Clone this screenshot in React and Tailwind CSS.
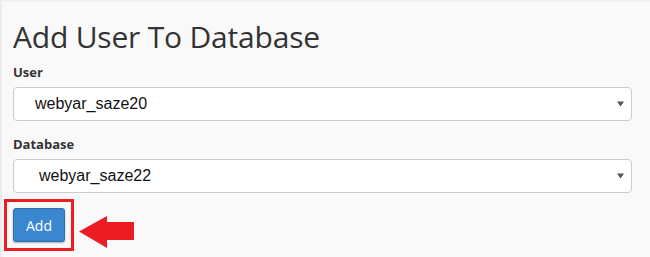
export default function App() {
  const Arrow = () => (
    <svg width="7" height="6" viewBox="0 0 7 6" className="shrink-0">
      <path d="M0 0.5 H7 L3.5 5.5 Z" fill="#555" />
    </svg>
  );
  return (
    <div className="w-[650px] h-[257px] bg-[#f9f9f9] overflow-hidden shadow-[inset_2px_1px_2px_rgba(0,0,0,0.06)] pl-[13px] pr-[18px] pt-[20px]" style={{ fontFamily: '"Open Sans", sans-serif' }}>
      <h1 className="text-[30px] leading-[33px] tracking-[-0.2px] text-[#333] font-normal">Add User To Database</h1>
      <div className="mt-[10px] text-[13px] leading-[18px] font-bold text-[#333]">User</div>
      <div className="mt-[6px] h-[34px] bg-white border border-[#ccc] rounded-[4px] flex items-center justify-between pl-[21px] pr-[7px]">
        <span className="text-[16px] text-[#111]" style={{ fontFamily: '"Liberation Sans", Arial, sans-serif' }}>webyar_saze20</span>
        <Arrow />
      </div>
      <div className="mt-[14px] text-[13px] leading-[18px] font-bold text-[#333]">Database</div>
      <div className="mt-[6px] h-[34px] bg-white border border-[#ccc] rounded-[4px] flex items-center justify-between pl-[25px] pr-[7px]">
        <span className="text-[16px] text-[#111]" style={{ fontFamily: '"Liberation Sans", Arial, sans-serif' }}>webyar_saze22</span>
        <Arrow />
      </div>
      <div className="mt-[6px] flex items-start">
        <div className="ml-[-9px] border-[3px] border-[#ed1c24] p-[6px]">
          <button className="h-[34px] w-[52px] rounded-[3px] bg-[#3a87d0] border border-[#2f6fae] text-white text-[14px] flex items-center justify-center shadow-[0_1px_2px_rgba(0,0,0,0.3)]">Add</button>
        </div>
        <svg width="56" height="33" viewBox="0 0 56 33" className="ml-[5px] mt-[17px]">
          <path d="M0 15.5 L28 0 V6 H55 V24 H28 V32 Z" fill="#ed1c24" />
        </svg>
      </div>
    </div>
  );
}
